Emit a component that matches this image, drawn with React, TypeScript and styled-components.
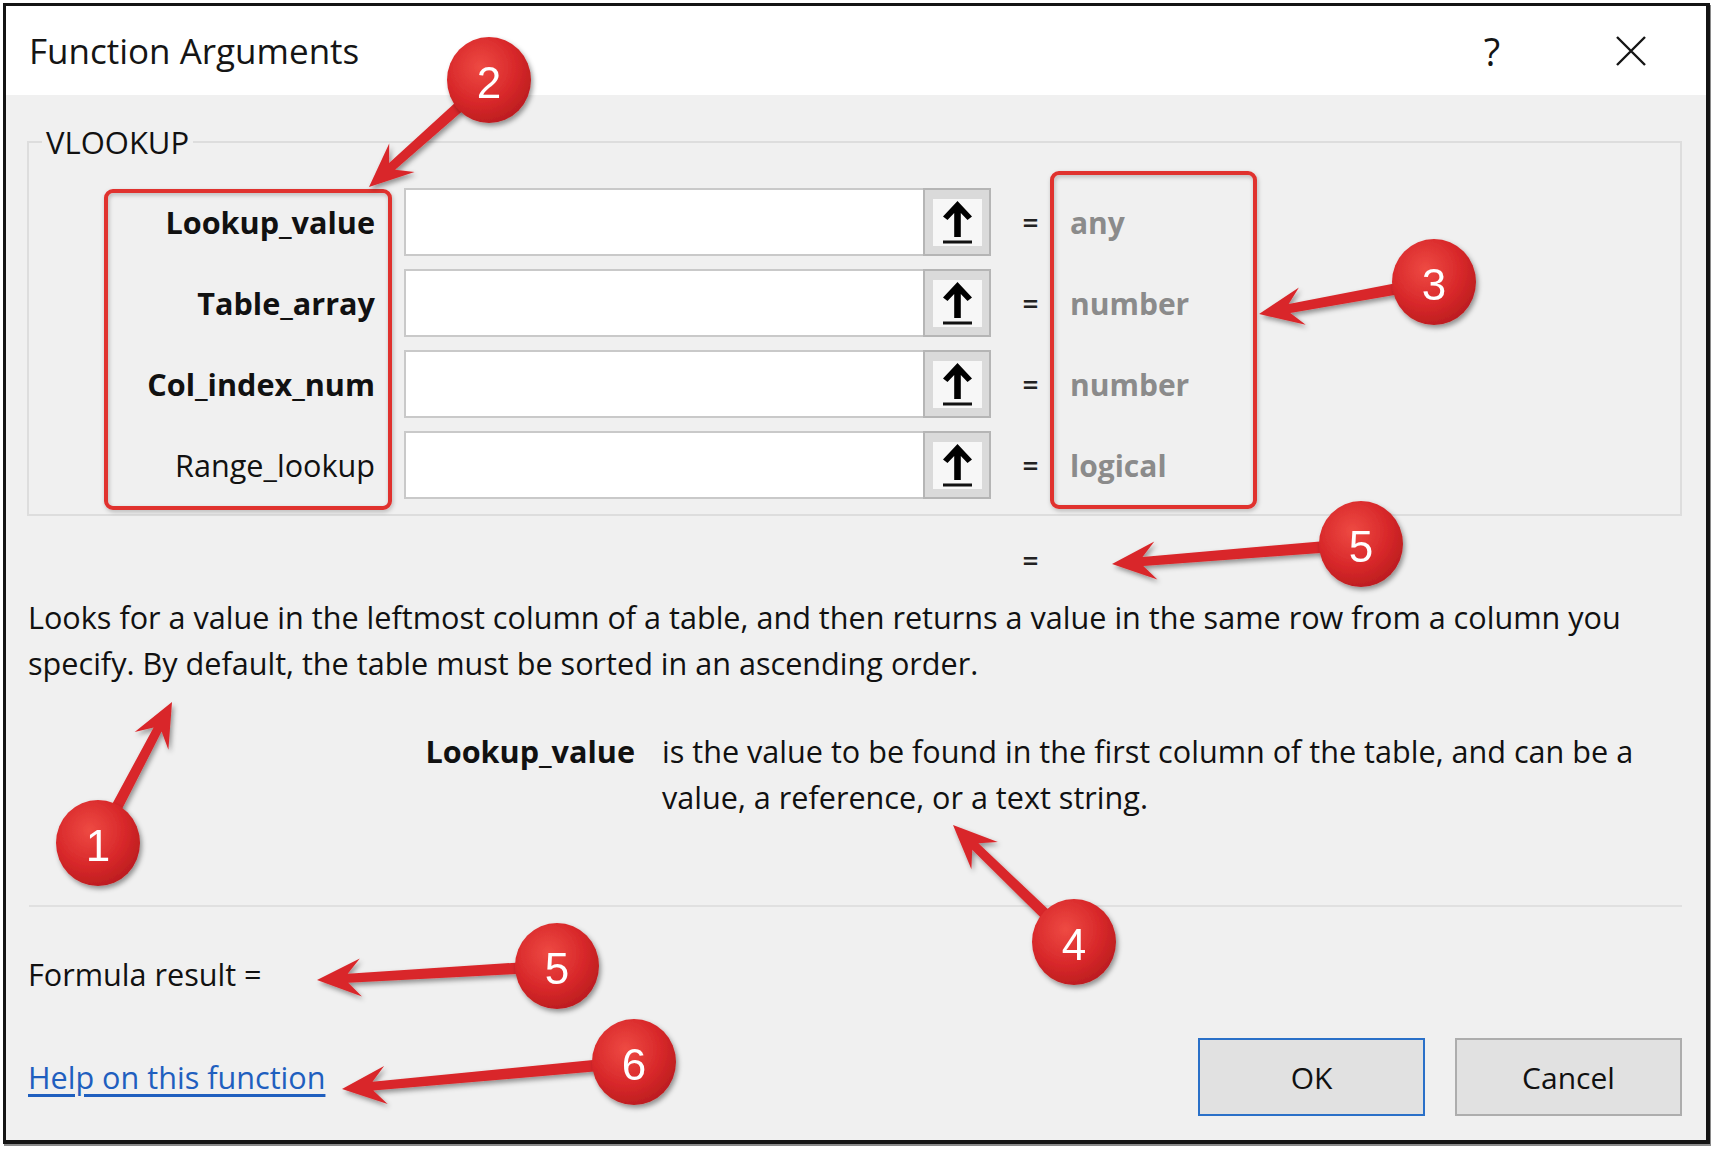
import React from "react";
import styled, { createGlobalStyle } from "styled-components";

const GlobalStyle = createGlobalStyle`
  html, body {
    margin: 0;
    padding: 0;
    background: #ffffff;
  }
  body {
    font-family: "Open Sans", "Liberation Sans", sans-serif;
  }
`;

const Page = styled.div`
  position: relative;
  width: 1713px;
  height: 1153px;
  padding: 3px 3px 0 3px;
  box-sizing: border-box;
  overflow: hidden;
`;

const Dialog = styled.div`
  display: flex;
  flex-direction: column;
  border: 3px solid #141414;
  border-right-width: 4px;
  border-bottom-width: 4px;
  box-shadow: 1px 2px 0 #8a8a8a;
  background: #f0f0f0;
  color: #111111;
`;

const TitleBar = styled.div`
  height: 89px;
  display: flex;
  align-items: center;
  background: #ffffff;
  padding-left: 23px;
  padding-right: 35px;
`;

const Title = styled.div`
  flex: 1;
  font-size: 35px;
  line-height: 1;
  color: #151515;
`;

const TitleButton = styled.div<{ $gap?: number }>`
  width: 80px;
  height: 60px;
  display: flex;
  align-items: center;
  justify-content: center;
  color: #151515;
  font-size: 38px;
  line-height: 1;
  margin-left: ${(p) => p.$gap ?? 0}px;
`;

const Body = styled.div`
  display: flex;
  flex-direction: column;
  padding: 31px 24px 24px 21px;
  font-size: 30.6px;
`;

const Group = styled.fieldset`
  margin: 0;
  padding: 30px 0 15px 0;
  border: 2px solid #dddddd;
  min-width: 0;
`;

const Legend = styled.legend`
  margin-left: 13px;
  padding: 0 4px;
  font-size: 31px;
  line-height: 32px;
  color: #111111;
`;

const Rows = styled.div`
  display: flex;
  flex-direction: column;
  gap: 13px;
`;

const Row = styled.div`
  display: grid;
  grid-template-columns: 375px 587px 79px 1fr;
  align-items: center;
  height: 68px;
`;

const ArgLabel = styled.div<{ $bold?: boolean }>`
  text-align: right;
  padding-right: 29px;
  font-weight: ${(p) => (p.$bold ? 700 : 400)};
  color: #111111;
`;

const InputGroup = styled.div`
  display: flex;
  height: 68px;
`;

const TextBox = styled.div`
  flex: 1;
  background: #ffffff;
  border: 2px solid #c9c9c9;
  border-right: none;
`;

const RefButton = styled.div`
  width: 68px;
  box-sizing: border-box;
  border: 2px solid #b5b5b5;
  background: #dadada;
  display: flex;
  align-items: center;
  justify-content: center;
`;

const RefIconBox = styled.div`
  width: 49px;
  height: 47px;
  background: #f7f7f7;
  display: flex;
  align-items: center;
  justify-content: center;
`;

const Eq = styled.div`
  text-align: center;
  font-size: 28px;
  font-weight: 600;
  color: #222222;
`;

const TypeText = styled.div`
  font-size: 30px;
  font-weight: 700;
  color: #8b8b8b;
`;

const ResultEq = styled.div`
  margin: 21px 0 0 964px;
  width: 79px;
  text-align: center;
  font-size: 28px;
  font-weight: 600;
  line-height: 46px;
  color: #222222;
`;

const Description = styled.p`
  margin: 11px 0 0 1px;
  line-height: 46px;
  white-space: nowrap;
`;

const ArgHelp = styled.div`
  margin-top: 42px;
  display: grid;
  grid-template-columns: 608px 1fr;
  column-gap: 27px;
  line-height: 46px;
`;

const ArgName = styled.div`
  text-align: right;
  font-weight: 700;
`;

const ArgText = styled.div`
  white-space: nowrap;
`;

const Separator = styled.div`
  margin: 85px 0 0 2px;
  height: 2px;
  background: #e0e0e0;
`;

const FormulaResult = styled.div`
  margin: 44px 0 0 1px;
  line-height: 46px;
`;

const Footer = styled.div`
  margin-top: 41px;
  display: flex;
  align-items: center;
  gap: 30px;
`;

const HelpLink = styled.a`
  flex: 1;
  margin-left: 1px;
  color: #1f5fbf;
  text-decoration: underline;
  text-underline-offset: 5px;
  cursor: pointer;
`;

const DialogButton = styled.button<{ $primary?: boolean }>`
  width: 227px;
  height: 78px;
  box-sizing: border-box;
  background: #e1e1e1;
  border: 2px solid ${(p) => (p.$primary ? "#2a70c8" : "#adadad")};
  font-family: inherit;
  font-size: 30px;
  color: #111111;
  padding: 0;
`;

const Overlay = styled.svg`
  position: absolute;
  top: 0;
  left: 0;
  width: 1713px;
  height: 1153px;
  pointer-events: none;
`;

const RefArrow = () => (
  <svg width="49" height="47" viewBox="0 0 49 47">
    <polygon points="24.5,2 39,17.5 34.5,21 27.8,14 27.8,38 21.2,38 21.2,14 14.5,21 10,17.5" fill="#000" />
    <rect x="10" y="41.5" width="29" height="3" fill="#111" />
  </svg>
);

const CloseIcon = () => (
  <svg width="32" height="32" viewBox="0 0 32 32">
    <path d="M2 2 L30 30 M30 2 L2 30" stroke="#151515" strokeWidth="2.4" fill="none" />
  </svg>
);

const args = [
  { name: "Lookup_value", bold: true, type: "any" },
  { name: "Table_array", bold: true, type: "number" },
  { name: "Col_index_num", bold: true, type: "number" },
  { name: "Range_lookup", bold: false, type: "logical" },
];

// callout arrow: tapered shaft from the circle to a barbed head
function arrowPoints(x1: number, y1: number, x2: number, y2: number) {
  const dx = x1 - x2;
  const dy = y1 - y2;
  const len = Math.hypot(dx, dy);
  const ux = dx / len;
  const uy = dy / len;
  const nx = -uy;
  const ny = ux;
  const p = (a: number, b: number, along: number, side: number) =>
    `${(a + ux * along + nx * side).toFixed(1)},${(b + uy * along + ny * side).toFixed(1)}`;
  return [
    p(x2, y2, 0, 0),
    p(x2, y2, 44, 19),
    p(x2, y2, 31, 4.5),
    p(x1, y1, 0, 6),
    p(x1, y1, 0, -6),
    p(x2, y2, 31, -4.5),
    p(x2, y2, 44, -19),
  ].join(" ");
}

const callouts = [
  { n: "2", cx: 489, cy: 80, tx: 369, ty: 187 },
  { n: "3", cx: 1434, cy: 282, tx: 1259, ty: 314 },
  { n: "5", cx: 1361, cy: 544, tx: 1112, ty: 564 },
  { n: "1", cx: 98, cy: 843, tx: 172, ty: 702 },
  { n: "4", cx: 1074, cy: 942, tx: 953, ty: 825 },
  { n: "5", cx: 557, cy: 966, tx: 317, ty: 980 },
  { n: "6", cx: 634, cy: 1062, tx: 342, ty: 1089 },
];

const Annotations = () => (
  <Overlay viewBox="0 0 1713 1153">
    <defs>
      <radialGradient id="bubble" cx="40%" cy="35%" r="70%">
        <stop offset="0%" stopColor="#ee4a43" />
        <stop offset="60%" stopColor="#d8282a" />
        <stop offset="100%" stopColor="#b91c1e" />
      </radialGradient>
      <filter id="shadow" x="-30%" y="-30%" width="160%" height="160%">
        <feDropShadow dx="2" dy="3" stdDeviation="2.5" floodColor="#000" floodOpacity="0.4" />
      </filter>
      <filter id="soft" x="-10%" y="-10%" width="120%" height="120%">
        <feDropShadow dx="1" dy="2" stdDeviation="2" floodColor="#000" floodOpacity="0.25" />
      </filter>
    </defs>
    <rect x="106" y="191" width="284" height="317" rx="7" fill="none" stroke="#e0302e" strokeWidth="4" filter="url(#soft)" />
    <rect x="1052" y="173" width="203" height="334" rx="7" fill="none" stroke="#e0302e" strokeWidth="4" filter="url(#soft)" />
    {callouts.map((c, i) => (
      <polygon key={"a" + i} points={arrowPoints(c.cx, c.cy, c.tx, c.ty)} fill="#d9272a" filter="url(#shadow)" />
    ))}
    {callouts.map((c, i) => (
      <g key={"c" + i} filter="url(#shadow)">
        <ellipse cx={c.cx} cy={c.cy} rx="42" ry="43" fill="url(#bubble)" />
        <text
          x={c.cx}
          y={c.cy + 2}
          fill="#ffffff"
          fontFamily="Liberation Sans, Arial, sans-serif"
          fontSize="44"
          textAnchor="middle"
          dominantBaseline="central"
        >
          {c.n}
        </text>
      </g>
    ))}
  </Overlay>
);

export default function App() {
  return (
    <Page>
      <GlobalStyle />
      <Dialog>
        <TitleBar>
          <Title>Function Arguments</Title>
          <TitleButton>?</TitleButton>
          <TitleButton $gap={59}>
            <CloseIcon />
          </TitleButton>
        </TitleBar>
        <Body>
          <Group>
            <Legend>VLOOKUP</Legend>
            <Rows>
              {args.map((a) => (
                <Row key={a.name}>
                  <ArgLabel $bold={a.bold}>{a.name}</ArgLabel>
                  <InputGroup>
                    <TextBox />
                    <RefButton>
                      <RefIconBox>
                        <RefArrow />
                      </RefIconBox>
                    </RefButton>
                  </InputGroup>
                  <Eq>=</Eq>
                  <TypeText>{a.type}</TypeText>
                </Row>
              ))}
            </Rows>
          </Group>
          <ResultEq>=</ResultEq>
          <Description>
            Looks for a value in the leftmost column of a table, and then returns a value in the same row from a column you
            <br />
            specify. By default, the table must be sorted in an ascending order.
          </Description>
          <ArgHelp>
            <ArgName>Lookup_value</ArgName>
            <ArgText>
              is the value to be found in the first column of the table, and can be a
              <br />
              value, a reference, or a text string.
            </ArgText>
          </ArgHelp>
          <Separator />
          <FormulaResult>Formula result =</FormulaResult>
          <Footer>
            <HelpLink>Help on this function</HelpLink>
            <DialogButton $primary>OK</DialogButton>
            <DialogButton>Cancel</DialogButton>
          </Footer>
        </Body>
      </Dialog>
      <Annotations />
    </Page>
  );
}
